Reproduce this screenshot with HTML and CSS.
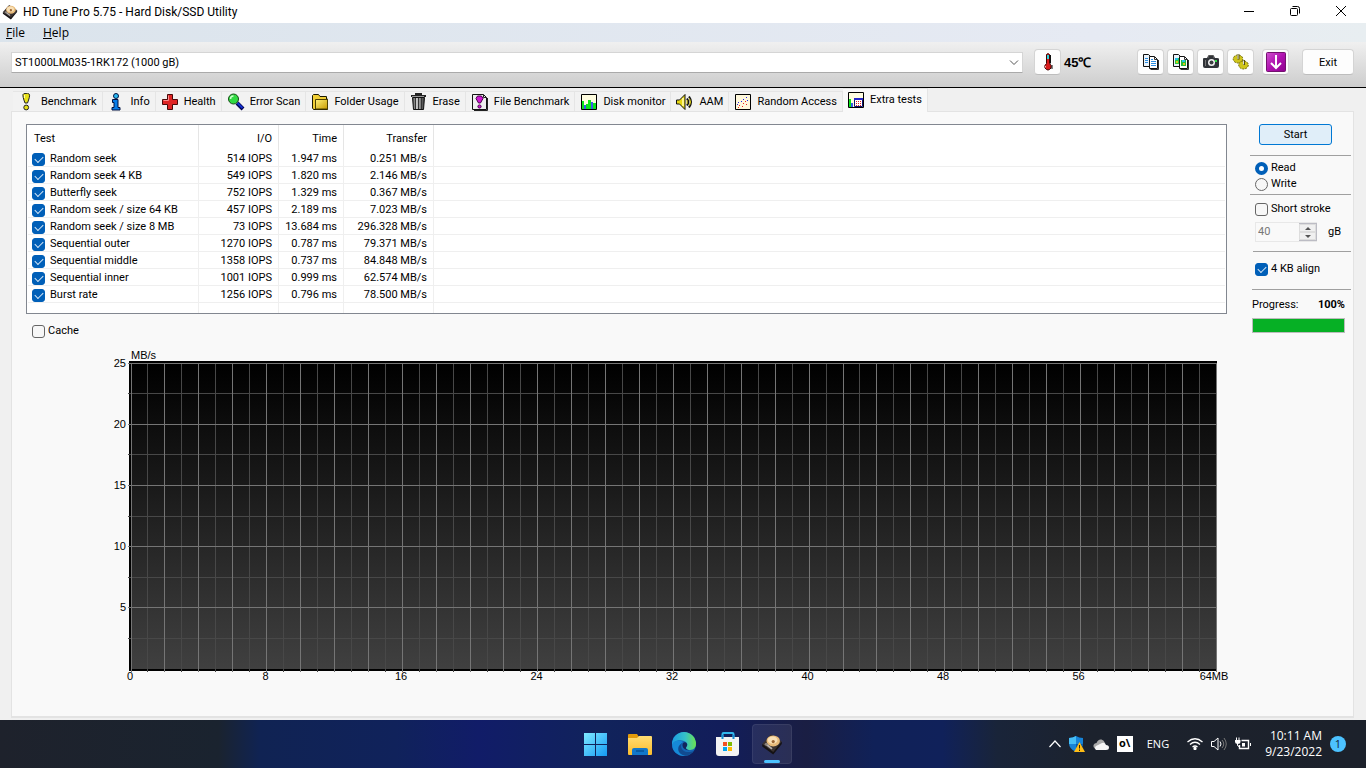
FILE: index.html
```html
<!DOCTYPE html>
<html lang="en">
<head>
<meta charset="utf-8">
<title>HD Tune Pro 5.75 - Hard Disk/SSD Utility</title>
<link rel="stylesheet" href="styles.css">
</head>
<body>
<svg class="defs" width="0" height="0" aria-hidden="true">
  <defs>
    <linearGradient id="gold" x1="0" y1="0" x2="1" y2="1"><stop offset="0" stop-color="#fff27a"/><stop offset="1" stop-color="#c79a00"/></linearGradient>
    <linearGradient id="win" x1="0" y1="0" x2="1" y2="1"><stop offset="0" stop-color="#7fe9ff"/><stop offset="1" stop-color="#149bf5"/></linearGradient>
    <linearGradient id="folder" x1="0" y1="0" x2="0" y2="1"><stop offset="0" stop-color="#ffdd73"/><stop offset="1" stop-color="#fbbc2c"/></linearGradient>
    <linearGradient id="edgeTop" x1="0" y1="0" x2="1" y2="0"><stop offset="0" stop-color="#1b9de2"/><stop offset=".55" stop-color="#35c1c9"/><stop offset="1" stop-color="#6be24f"/></linearGradient>
    <linearGradient id="purple" x1="0" y1="0" x2="1" y2="1"><stop offset="0" stop-color="#d052d0"/><stop offset=".5" stop-color="#b012b0"/><stop offset="1" stop-color="#8d008d"/></linearGradient>
    <linearGradient id="can" x1="0" y1="0" x2="1" y2="0"><stop offset="0" stop-color="#444"/><stop offset=".35" stop-color="#ccc"/><stop offset="1" stop-color="#333"/></linearGradient>
    <symbol id="hdd" viewBox="0 0 18 18">
      <path d="M1 9 8 1l9 6-7 10z" fill="#3a3230"/>
      <path d="M1 9v2l9 6.500v-2zM17 7v2l-7 8.500v-2z" fill="#151214"/>
      <ellipse cx="10" cy="6.500" rx="5.500" ry="4.500" fill="#e8bb7a"/>
      <ellipse cx="9.500" cy="5.800" rx="4" ry="3" fill="#f8dfb5"/>
      <circle cx="10" cy="7" r="1.300" fill="#9c6634"/>
      <path d="m4 9 5 4" stroke="#b9b2ac" stroke-width="1.500"/>
      <circle cx="4.200" cy="9.300" r="1.200" fill="#8b837c"/>
    </symbol>
    <symbol id="pages" viewBox="0 0 18 18">
      <path d="M1.500 1.500h5l2 2v10h-7z" fill="#eaf3fb" stroke="#111"/>
      <path d="M7.500 3.500h5l3 3v9h-8z" fill="#fff" stroke="#111"/>
      <path d="M12.500 3.500v3h3M16.500 7v9.500h-8" fill="none" stroke="#333"/>
    </symbol>
  </defs>
</svg>

<header class="titlebar">
  <svg class="app-icon" aria-hidden="true"><use href="#hdd"/></svg>
  <h1 class="title">HD Tune Pro 5.75 - Hard Disk/SSD Utility</h1>
  <div class="window-controls">
    <button class="window-button" type="button" aria-label="Minimize"><svg width="12" height="12" viewBox="0 0 12 12"><path d="M1 6.500h10" stroke="#000"/></svg></button>
    <button class="window-button" type="button" aria-label="Restore"><svg width="12" height="12" viewBox="0 0 12 12" fill="none" stroke="#000"><rect x="1.500" y="3.500" width="7" height="7" rx="1"/><path d="M3.500 1.500h5a2 2 0 0 1 2 2v5"/></svg></button>
    <button class="window-button" type="button" aria-label="Close"><svg width="12" height="12" viewBox="0 0 12 12"><path d="m1 1 10 10M11 1 1 11" stroke="#000"/></svg></button>
  </div>
</header>

<nav class="menubar">
  <button class="menu" type="button"><u>F</u>ile</button>
  <button class="menu" type="button"><u>H</u>elp</button>
</nav>

<div class="toolbar">
  <div class="drive">
    <select class="drive-select" aria-label="Drive"><option>ST1000LM035-1RK172 (1000 gB)</option></select>
    <svg class="drive-arrow" width="10" height="6" viewBox="0 0 10 6"><path d="m1 .5 4 4 4-4" fill="none" stroke="#555"/></svg>
  </div>
  <button class="tool" type="button" aria-label="Temperature">
    <svg width="18" height="18" viewBox="0 0 18 18"><path d="M7.500 1.500q1.500-1.800 3 0v9q2.500 2 1.500 4.500-1.500 2-3 2t-3-2q-1-2.500 1.500-4.500z" fill="#d81b1b" stroke="#400"/><path d="M8 2h2v4H8z" fill="#31d3dc"/><path d="M11.500 2v8.500M13 12v4" stroke="#111"/><path d="M6.500 13v1.500" stroke="#ffb0b0"/></svg>
  </button>
  <output class="temperature">45℃</output>
  <div class="tool-group">
    <button class="tool" type="button" aria-label="Copy text"><svg width="18" height="18"><use href="#pages"/><path d="M3 5.500h3M3 7.500h3M3 9.500h3M9 8.500h5M9 10.500h5M9 12.500h5M9 6.500h2" stroke="#2d8de0"/></svg></button>
    <button class="tool" type="button" aria-label="Copy image"><svg width="18" height="18"><use href="#pages"/><path d="M3 5h4v6H3z" fill="#28c840"/><path d="M9 7h5v6H9z" fill="#24b83e"/><path d="M3 5h3v2H3zM10 7h3v2h-3z" fill="#26bfe8"/><path d="M4 8h2v2H4zM11 10h2v2h-2z" fill="#dccc18"/></svg></button>
    <button class="tool" type="button" aria-label="Screenshot"><svg width="18" height="18" viewBox="0 0 18 18"><path d="M1 6q0-1 1-1h3l1-2h6l1 2h2q2 0 2 1v7q0 2-2 2H3q-2 0-2-2z" fill="#303338"/><path d="M6.500 5V2.500h5V5" fill="none" stroke="#555"/><circle cx="9.500" cy="9.500" r="3.500" fill="#f2f2f2"/><circle cx="9.500" cy="9.500" r="2" fill="#3b3d40"/><path d="M13 7h2v2h-2z" fill="#2bdc42"/><path d="M3.500 7v6" stroke="#777"/></svg></button>
    <button class="tool" type="button" aria-label="Options"><svg width="18" height="18" viewBox="0 0 18 18"><ellipse cx="6" cy="6" rx="4.800" ry="4" fill="#cfc51a" stroke="#6f6806" stroke-dasharray="2 1"/><ellipse cx="11.500" cy="12" rx="4.800" ry="4" fill="#cfc51a" stroke="#6f6806" stroke-dasharray="2 1"/><path d="M6.500 1.500v5M12 7v5" stroke="#57500b" stroke-width="2"/><path d="M6 2v4M11.500 7.500v4" stroke="#ddd"/></svg></button>
  </div>
  <button class="tool save" type="button" aria-label="Save"><svg width="20" height="20" viewBox="0 0 20 20"><rect x=".5" y=".5" width="19" height="19" rx="1" fill="url(#purple)" stroke="#74116f"/><path d="M10 3v12M5 11l5 5 5-5" fill="none" stroke="#fff" stroke-width="2"/></svg></button>
  <button class="exit" type="button">Exit</button>
</div>

<main class="workspace">
  <div class="tabs" role="tablist">
    <button class="tab" type="button" role="tab"><svg class="tab-icon" viewBox="0 0 18 18"><path d="M7 .5q3-1 4.500 1 .5 2-2 8.500H7Q4.500 3.500 5 1.500q.5-1 2-1z" fill="#e7e016" stroke="#222"/><path d="M6.500 2v3" stroke="#fffbb0"/><circle cx="8.200" cy="14.500" r="2.400" fill="#e7e016" stroke="#222"/></svg>Benchmark</button>
    <button class="tab" type="button" role="tab"><svg class="tab-icon" viewBox="0 0 18 18"><circle cx="8" cy="3" r="2.500" fill="#28b9f2" stroke="#001040"/><path d="M4.500 6.500H10v8h2V17H4v-2.500h2v-5H4.500z" fill="#087de8" stroke="#001040"/></svg>Info</button>
    <button class="tab" type="button" role="tab"><svg class="tab-icon" viewBox="0 0 18 18"><path d="M6.500 1.500h5v5h5v5h-5v5h-5v-5h-5v-5h5z" fill="#df2525" stroke="#4a0808"/><path d="M7.500 2.500v5h-5" fill="none" stroke="#ff8b8b"/></svg>Health</button>
    <button class="tab" type="button" role="tab"><svg class="tab-icon" viewBox="0 0 18 18"><path d="m10 10 6 6" stroke="#000050" stroke-width="4"/><path d="m10.500 10 5 5" stroke="#1230d0" stroke-width="2"/><circle cx="6.500" cy="6" r="5" fill="#30da42" stroke="#164b16"/><path d="M3.500 6q0-3 3-3" fill="none" stroke="#c9ffc9" stroke-width="1.500"/></svg>Error Scan</button>
    <button class="tab" type="button" role="tab"><svg class="tab-icon" viewBox="0 0 18 18"><path d="M1.500 15V2.500l1-1h5l1.500 2h6.500V6h1v10.500h-14z" fill="#f1cf36" stroke="#1c1a00"/><path d="M4.500 16V6.500h12v9.500z" fill="url(#gold)" stroke="#4d4100"/></svg>Folder Usage</button>
    <button class="tab" type="button" role="tab"><svg class="tab-icon" viewBox="0 0 18 18"><path d="M2.500 4.500h12l-1 12h-10z" fill="url(#can)" stroke="#111"/><path d="M1 3h15M5 1h7" stroke="#222" stroke-width="2"/><path d="M2 3.500h12" stroke="#999"/><path d="M5.500 5v11M8.500 5v11M11.500 5v11" stroke="#333"/></svg>Erase</button>
    <button class="tab" type="button" role="tab"><svg class="tab-icon" viewBox="0 0 18 18"><path d="M1.500 1.500h11l3 3v12h-14z" fill="#eee" stroke="#111"/><path d="M12.500 1.500v3h3M16.500 5v12.500H3" fill="none" stroke="#222"/><path d="M6.500 3h4l1.500 2.500L9.500 10h-2L5 5.500z" fill="#cf16d2" stroke="#46004a"/><circle cx="8.500" cy="13.500" r="1.600" fill="#cf16d2" stroke="#46004a"/></svg>File Benchmark</button>
    <button class="tab" type="button" role="tab"><svg class="tab-icon" viewBox="0 0 18 18"><path d="M1.500 1.500h15v15h-15z" fill="#fffde0" stroke="#000"/><path d="M2 8h2v8H2zM6 11h2v5H6zM8 7h3v9H8zM13 10h3v6h-3z" fill="#0be51b"/><path d="M4 12h2v4H4zM11 9h2v7h-2z" fill="#3b5bea"/></svg>Disk monitor</button>
    <button class="tab" type="button" role="tab"><svg class="tab-icon" viewBox="0 0 18 18"><path d="M.5 7h3L9 1.500v15L3.500 11h-3z" fill="#e7d814" stroke="#111"/><path d="M7 5v8" stroke="#fff78c" stroke-width="2"/><path d="M11 5.500q2.500 3.500 0 7M13 3.500q4 5.500 0 11" fill="none" stroke="#111" stroke-width="2"/><path d="M11 7v4M13.500 5.500q2 3.500 0 7" fill="none" stroke="#e7d814"/></svg>AAM</button>
    <button class="tab" type="button" role="tab"><svg class="tab-icon" viewBox="0 0 18 18"><path d="M1.500 1.500h15v15h-15z" fill="#fff8db" stroke="#000"/><path d="M12 4h1v1h-1zM9 6h1v1H9zM13 7h1v1h-1zM4 9h1v1H4zM7 8h1v1H7zM3 11h1v1H3z" fill="#2525e8"/><path d="M11 8h1v1h-1zM9 10h1v1H9zM5 12h1v1H5zM12 11h1v1h-1zM4 14h1v1H4zM8 13h1v1H8z" fill="#ef2020"/></svg>Random Access</button>
    <button class="tab tab-active" type="button" role="tab" aria-selected="true"><svg class="tab-icon" viewBox="0 0 18 18"><path d="M1.500 1.500h15v15h-15z" fill="#fffde0" stroke="#000"/><path d="M2 8h2v8H2z" fill="#0be51b"/><path d="M4 12h2v4H4z" fill="#3b5bea"/><path d="M7.500 7.500h8v8h-8z" fill="#fff" stroke="#101070"/><path d="M7 8h9" stroke="#2525c8" stroke-width="2"/><path d="M9 10.500h6M9 12.500h6M9 14.500h6" stroke="#e02020" stroke-dasharray="1 1"/></svg>Extra tests</button>
  </div>

  <section class="panel">
    <div class="results">
      <div class="table-frame">
        <table class="tests">
          <colgroup><col class="col-test"><col class="col-io"><col class="col-time"><col class="col-transfer"><col></colgroup>
          <thead><tr><th>Test</th><th>I/O</th><th>Time</th><th>Transfer</th><th></th></tr></thead>
          <tbody>
            <tr><td><label class="choice"><input type="checkbox" checked>Random seek</label></td><td>514 IOPS</td><td>1.947 ms</td><td>0.251 MB/s</td><td></td></tr>
            <tr><td><label class="choice"><input type="checkbox" checked>Random seek 4 KB</label></td><td>549 IOPS</td><td>1.820 ms</td><td>2.146 MB/s</td><td></td></tr>
            <tr><td><label class="choice"><input type="checkbox" checked>Butterfly seek</label></td><td>752 IOPS</td><td>1.329 ms</td><td>0.367 MB/s</td><td></td></tr>
            <tr><td><label class="choice"><input type="checkbox" checked>Random seek / size 64 KB</label></td><td>457 IOPS</td><td>2.189 ms</td><td>7.023 MB/s</td><td></td></tr>
            <tr><td><label class="choice"><input type="checkbox" checked>Random seek / size 8 MB</label></td><td>73 IOPS</td><td>13.684 ms</td><td>296.328 MB/s</td><td></td></tr>
            <tr><td><label class="choice"><input type="checkbox" checked>Sequential outer</label></td><td>1270 IOPS</td><td>0.787 ms</td><td>79.371 MB/s</td><td></td></tr>
            <tr><td><label class="choice"><input type="checkbox" checked>Sequential middle</label></td><td>1358 IOPS</td><td>0.737 ms</td><td>84.848 MB/s</td><td></td></tr>
            <tr><td><label class="choice"><input type="checkbox" checked>Sequential inner</label></td><td>1001 IOPS</td><td>0.999 ms</td><td>62.574 MB/s</td><td></td></tr>
            <tr><td><label class="choice"><input type="checkbox" checked>Burst rate</label></td><td>1256 IOPS</td><td>0.796 ms</td><td>78.500 MB/s</td><td></td></tr>
          </tbody>
          <tfoot><tr><td></td><td></td><td></td><td></td><td></td></tr></tfoot>
        </table>
      </div>
      <label class="choice cache"><input type="checkbox">Cache</label>
      <div class="chart">
        <div class="unit">MB/s</div>
        <div class="y-axis"><span>25</span><span>20</span><span>15</span><span>10</span><span>5</span><span></span></div>
        <div class="plot"><svg class="grid" width="100%" height="100%" aria-hidden="true"></svg></div>
        <div class="x-axis"><span>0</span><span>8</span><span>16</span><span>24</span><span>32</span><span>40</span><span>48</span><span>56</span><span>64MB</span></div>
      </div>
    </div>

    <aside class="options">
      <button class="start" type="button">Start</button>
      <div class="group modes">
        <label class="choice"><input type="radio" name="mode" checked>Read</label>
        <label class="choice"><input type="radio" name="mode">Write</label>
      </div>
      <div class="group stroke">
        <label class="choice"><input type="checkbox">Short stroke</label>
        <div class="size">
          <div class="spinner">
            <input class="size-input" id="size" type="text" value="40" disabled>
            <div class="steps">
              <button class="step" type="button" aria-label="Increase" disabled><svg width="6" height="3"><path d="M0 3 3 0l3 3z" fill="#555"/></svg></button>
              <button class="step" type="button" aria-label="Decrease" disabled><svg width="6" height="3"><path d="m0 0 3 3 3-3z" fill="#555"/></svg></button>
            </div>
          </div>
          <label for="size">gB</label>
        </div>
      </div>
      <div class="group align"><label class="choice"><input type="checkbox" checked>4 KB align</label></div>
      <div class="group progress">
        <div class="progress-text"><span>Progress:</span><strong>100%</strong></div>
        <div class="bar" role="progressbar" aria-label="Progress" aria-valuenow="100"><div class="bar-fill" style="width:100%"></div></div>
      </div>
    </aside>
  </section>
</main>

<footer class="taskbar">
  <div class="apps">
    <button class="app" type="button" aria-label="Start"><svg width="24" height="24" viewBox="0 0 24 24"><path d="M0 1h11v11H0zM12 1h11v11H12zM0 13h11v11H0zM12 13h11v11H12z" fill="url(#win)"/></svg></button>
    <button class="app" type="button" aria-label="File Explorer"><svg width="24" height="24" viewBox="0 0 24 24"><path d="M0 3q0-1 1-1h8l2 3v4H0z" fill="#e29a0b"/><path d="M0 6h9l2-2h12q1 0 1 1v17q0 1-1 1H1q-1 0-1-1z" fill="url(#folder)"/><path d="M4 23v-5q0-2 2-2h12q2 0 2 2v5z" fill="#1177c9"/><path d="M8 19h8" stroke="#075294" stroke-width="1.500"/></svg></button>
    <button class="app" type="button" aria-label="Edge"><svg width="24" height="24" viewBox="0 0 24 24"><circle cx="12" cy="12" r="12" fill="#1466b5"/><path d="M0 12a12 12 0 0 1 24 0c0 5-4 6-7 6-3-.5-4-2-2-4 1-2 0-4-3-5C7 7 1 9 0 14z" fill="url(#edgeTop)"/><path d="M.2 13C2 7 9 8 11 10c-4 2-4 10 2 14C5 24 0 19 .2 13z" fill="#1689d8"/><path d="M10 11c-3 4 1 10 8 9 2 0 3-1 4-2-4 7-12 7-15 2-2-4 0-7 3-9z" fill="#114b91"/><path d="M11 11c2-2 5 0 4 3-2 2-1 4 3 4-5 1-9-3-7-7z" fill="#13265c"/></svg></button>
    <button class="app" type="button" aria-label="Store"><svg width="24" height="24" viewBox="0 0 24 24"><path d="M6.500 7V2q0-1 1-1h9q1 0 1 1v5" fill="none" stroke="#32b8ee" stroke-width="2"/><path d="M0 5h23v16q0 3-3 3H3q-3 0-3-3z" fill="#f3f3f3"/><path d="M6.500 3v4M17.500 3v4" stroke="#168bd0" stroke-width="2"/><path d="M7 10h4v4H7z" fill="#f25022"/><path d="M12 10h4v4h-4z" fill="#7fba00"/><path d="M7 15h4v4H7z" fill="#00a4ef"/><path d="M12 15h4v4h-4z" fill="#ffb900"/></svg></button>
    <button class="app app-active" type="button" aria-label="HD Tune Pro"><svg width="22" height="22"><use href="#hdd"/></svg></button>
  </div>
  <div class="tray">
    <svg width="12" height="8" viewBox="0 0 12 8"><path d="m.5 7 5.500-6L11.500 7" fill="none" stroke="#fff" stroke-width="1.200"/></svg>
    <svg width="16" height="16" viewBox="0 0 16 16"><path d="M7 0q3 2 7 2v5q0 6-7 9-7-3-7-9V2q4 0 7-2z" fill="#1683d8"/><path d="M7 0v8H0V2q4 0 7-2z" fill="#45bdf5"/><path d="M7 8h7q-1 5-7 8z" fill="#075baa"/><path d="m10.500 6 5.500 10H5z" fill="#ffbd16"/><path d="M10.500 9v3.500M10.500 13.500V15" stroke="#332300"/></svg>
    <svg width="16" height="11" viewBox="0 0 16 11"><path d="M3 10q-3-1-2.500-4 1-2 3-2Q5 0 8.500.5 11 1 12 4z" fill="#aaa"/><path d="M3 11Q1 9 3 7l6-3q3-1 4 2 3 0 3 2.500T13 11z" fill="#f6f6f6"/></svg>
    <span class="ime">o\</span>
    <span class="language">ENG</span>
    <svg width="16" height="12" viewBox="0 0 16 12" fill="none" stroke="#fff" stroke-width="1.300"><path d="M.5 4Q8-2.500 15.500 4M3 6.500q5-4.500 10 0M5.500 9q2.500-2 5 0"/><circle cx="8" cy="10.500" r="1" fill="#fff"/></svg>
    <svg width="16" height="14" viewBox="0 0 16 14" fill="none" stroke="#fff"><path d="M.5 4.500h2.500L7 1v12L3 9.500H.5z"/><path d="M9 4.500q2 2.500 0 5"/><path d="M11 3q3.500 4 0 8M13 1q4.500 6 0 12" stroke="#777"/></svg>
    <svg width="16" height="14" viewBox="0 0 16 14" fill="none" stroke="#fff"><path d="M6.500 3.500h7v8h-9V8" stroke-width="1.400"/><path d="M15.500 6v3M2.500 6v2q0 1.500 2 1.500"/><path d="M0 3h5.500v2q0 2-2.700 2T0 5z" fill="#fff" stroke="none"/><path d="M1.500.5v3M4 .5v3"/><path d="M7 6h3v3.500H7z" fill="#fff" stroke="none"/></svg>
    <div class="clock"><time>10:11 AM</time><time>9/23/2022</time></div>
    <span class="badge">1</span>
  </div>
</footer>
<script src="grid.js"></script>
</body>
</html>
```
FILE: styles.css
```css
* { box-sizing: border-box; }

body {
  margin: 0;
  min-height: 100vh;
  display: flex;
  flex-direction: column;
  background: #f0f0f0;
  color: #000;
  font: 11px/16px Roboto, "Liberation Sans", sans-serif;
}

button, select, input { font: inherit; color: inherit; margin: 0; }
button { padding: 0; border: 0; background: none; }
svg { flex: none; display: block; }
.defs { position: absolute; }

.titlebar { display: flex; height: 23px; align-items: center; background: #fff; padding: 0 2px; }
.app-icon { width: 16px; height: 16px; }
.title { margin: 0 auto 0 5px; font-size: 12px; font-weight: normal; }
.window-controls { display: flex; align-self: stretch; }
.window-button { width: 46px; display: flex; align-items: center; justify-content: center; padding-bottom: 2px; }

.menubar { display: flex; height: 19px; gap: 18px; padding: 0 6px; background: linear-gradient(90deg, #dbe4ec, #e6eaf3 80%, #e8eef1); }
.menu { font: 12px/19px "Open Sans", "Noto Sans", sans-serif; }

.toolbar {
  display: flex;
  height: 46px;
  align-items: center;
  gap: 11px;
  padding: 0 12px 5px 11px;
  border-bottom: 1px solid #000;
  background: linear-gradient(#f0f0f0, #cdcdcd);
}
.drive { position: relative; flex: 1; display: flex; }
.drive-select { appearance: none; width: 100%; height: 21px; padding: 1px 3px 0; border: 1px solid #d5d5d5; border-bottom-color: #aaa; border-radius: 0; background: #fff; }
.drive-arrow { position: absolute; right: 4px; top: 8px; pointer-events: none; }
.tool, .exit { height: 26px; border: 1px solid #d4d4d4; border-bottom-color: #bdbdbd; border-radius: 4px; background: #fdfdfd; }
.tool { width: 27px; display: flex; align-items: center; justify-content: center; }
.temperature { width: 62px; margin-left: -8px; padding-top: 1px; font: bold 13px/16px "Liberation Sans", Arial, sans-serif; }
.tool-group { display: flex; gap: 3px; margin-right: -3px; }
.save { margin-right: 2px; }
.exit { width: 52px; padding-top: 1px; }

.workspace { flex: 1; display: flex; flex-direction: column; padding: 0 12px 2px 11px; }
.tabs { display: flex; align-items: flex-end; height: 23px; padding-left: 2px; }
.tab { display: flex; align-items: center; gap: 5px; height: 20px; padding: 1px 5px 0 5px; border: 1px solid #e5e5e5; border-width: 1px 1px 0 0; background: #f2f2f2; white-space: nowrap; }
.tab-active { height: 24px; margin-bottom: -1px; padding: 1px 5px 2px 4px; background: #f9f9f9; z-index: 1; }
.tab-icon { width: 18px; height: 18px; }

.panel { flex: 1; display: flex; gap: 23px; padding: 12px 2px 0 14px; border: 1px solid #e3e3e3; border-width: 1px 1px 2px; background: #f9f9f9; }
.results { flex: 1; display: flex; flex-direction: column; }
.table-frame { border: 1px solid #828790; padding: 0 1px; background: #fff; }
.tests { width: 100%; table-layout: fixed; border-collapse: separate; border-spacing: 0; }
.col-test { width: 171px; }
.col-io { width: 80px; }
.col-time { width: 65px; }
.col-transfer { width: 90px; }
.tests th { height: 25px; padding: 3px 6px 0; font-weight: normal; text-align: right; border-right: 1px solid #e5e5e5; }
.tests td { height: 17px; padding: 2px 6px 0; line-height: 14px; text-align: right; border: 1px solid #efefef; border-width: 0 1px 1px 0; }
.tests tr > :first-child { text-align: left; }
.tests tr > :last-child { border-right: 0; }
.tests td:first-child { padding-left: 4px; }
.tests tfoot td { height: 10px; border-bottom: 0; }

.choice { display: flex; align-items: center; gap: 5px; }
.choice input { appearance: none; flex: none; width: 13px; height: 13px; display: grid; place-items: center; border: 1px solid #666; border-radius: 3px; background: #f7f7f7; }
.choice input:checked { border-color: #005fb8; background: #005fb8; }
.choice [type="checkbox"]:checked::before { content: ""; width: 7px; height: 4px; border: solid #d5e7f7; border-width: 0 0 1px 1px; transform: translateY(-1px) rotate(-45deg); }
.choice [type="radio"] { border-radius: 50%; }
.choice [type="radio"]:checked { border-width: 4px; background: #fff; }
.cache { gap: 3px; padding: 9px 6px 7px; }

.chart { flex: 1; display: grid; grid-template: 15px 1fr 45px / 103px 1fr; padding: 0 10px 0 0; font-family: "Liberation Sans", Arial, sans-serif; line-height: 13px; }
.unit { grid-column: 2; padding: 3px 0 0 2px; line-height: 12px; }
.y-axis { display: flex; flex-direction: column; justify-content: space-between; padding: 2px 3px 3px 0; text-align: right; }
.y-axis span { height: 0; line-height: 0; }
.plot { border: solid #000; border-width: 2px 1px 2px 2px; background: linear-gradient(#000, #404040); }
.grid { overflow: visible; shape-rendering: crispEdges; }
.grid-major { stroke: #757575; }
.grid-minor { stroke: #484848; }
.x-axis { grid-column: 2; display: flex; justify-content: space-between; padding: 0 3px 0 1px; line-height: 11px; }
.x-axis span { width: 0; display: flex; justify-content: center; }

.options { width: 101px; }
.options .choice { gap: 3px; }
.start { display: block; width: 73px; height: 21px; margin: 0 0 10px 9px; padding-top: 1px; border: 1px solid #0078d4; border-radius: 3px; background: #e0eef9; }
.group { border-top: 1px solid #a0a0a0; padding-left: 5px; }
.modes { height: 39px; padding-top: 4px; }
.stroke { height: 57px; padding-top: 6px; }
.align { height: 38px; margin-left: 3px; padding: 9px 0 0 2px; }
.progress { margin-left: 2px; padding: 7px 6px 0 0; }
.size { display: flex; align-items: center; gap: 11px; margin-top: 5px; }
.spinner { display: flex; width: 62px; height: 20px; border: 1px solid #e8e8e8; border-width: 1px 0 1px 1px; }
.size-input { flex: 1; min-width: 0; border: 0; padding: 0 2px; color: #777; background: #f9f9f9; }
.steps { display: flex; flex-direction: column; width: 18px; border: 1px solid #bcbcc4; border-left: 0; }
.step { flex: 1; display: flex; align-items: center; justify-content: center; border: 1px solid #ddd; background: #f0f0f0; }
.progress-text { display: flex; justify-content: space-between; }
.bar { height: 15px; margin-top: 5px; border: 1px solid #bcbcbc; background: #e6e6e6; }
.bar-fill { height: 100%; background: #06b025; }

.taskbar {
  display: grid;
  grid-template-columns: 1fr auto 1fr;
  align-items: center;
  height: 48px;
  color: #fff;
  font: 11px/16px "Open Sans", "Noto Sans", sans-serif;
  background: linear-gradient(90deg, #1e222c 0%, #1a232f 16%, #102353 19%, #10225b 29%, #111c68 35%, #11235b 44%, #121d5a 53%, #1a1e43 59%, #102158 64%, #10215a 69%, #192439 73%, #1c222d 80%, #1c212b 100%);
}
.apps { grid-column: 2; display: flex; gap: 4px; padding-left: 2px; }
.app { position: relative; width: 40px; height: 40px; display: flex; align-items: center; justify-content: center; border-radius: 4px; }
.app-active { background: #ffffff14; border: 1px solid #ffffff12; }
.app-active::after { content: ""; position: absolute; left: 11px; bottom: 0; width: 16px; height: 3px; border-radius: 2px; background: #4cc2ff; }
.tray { display: flex; align-items: center; justify-content: flex-end; gap: 8px; padding-right: 20px; }
.ime { width: 16px; height: 16px; margin-right: 6px; background: #fff; color: #000; font-weight: bold; text-align: center; line-height: 14px; }
.language { margin-right: 10px; }
.clock { display: grid; text-align: right; margin-left: 6px; font-size: 12px; }
.badge { width: 16px; height: 16px; border-radius: 50%; background: #4cc2ff; color: #10233a; text-align: center; }
```
FILE: grid.js
```js
const grid = document.querySelector('.grid');

function line(kind, x1, y1, x2, y2) {
  const el = document.createElementNS('http://www.w3.org/2000/svg', 'line');
  Object.entries({ class: kind, x1, y1, x2, y2 }).forEach(([k, v]) => el.setAttribute(k, v));
  grid.append(el);
}

// Minor lines go first so that major lines stay on top.
for (const [kind, start] of [['grid-minor', 1], ['grid-major', 0]]) {
  for (let i = start; i <= 64; i += 2) {
    const x = `${(i * 100) / 64}%`;
    line(kind, x, 0, x, '101%');
  }
  for (let i = start; i < 10; i += 2) {
    const y = `${i * 10}%`;
    line(kind, -3, y, '100%', y);
  }
}
```
